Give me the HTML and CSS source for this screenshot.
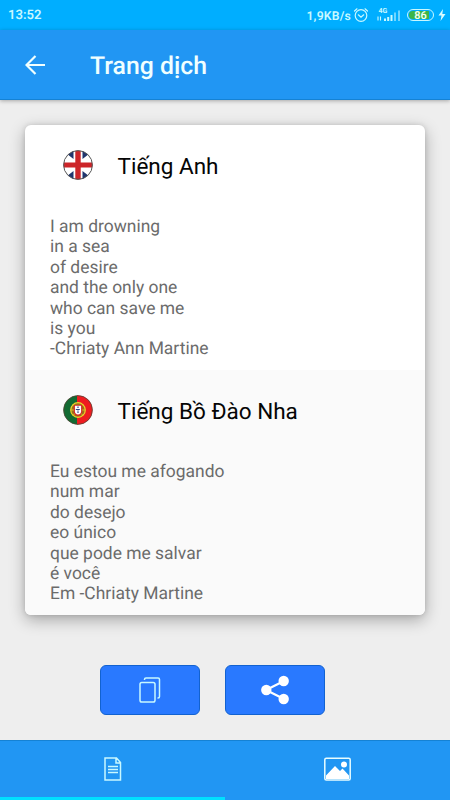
FILE: index.html
```html
<!DOCTYPE html>
<html lang="vi">
<head>
<meta charset="utf-8">
<title>Trang dịch</title>
<link rel="stylesheet" href="styles.css">
</head>
<body>
<div class="status">
  <span class="clock">13:52</span>
  <div class="status-right">
    <span class="speed">1,9KB/s</span>
    <svg class="alarm" width="16" height="16" viewBox="0 0 16 16" fill="none" stroke="#c8f8ff" stroke-width="1.2" stroke-linecap="round"><circle cx="8" cy="8.5" r="5.8"/><path d="M1.500 4 4 1.800M14.500 4 12 1.800M5.300 7.800 8 10.300l2.700-2.500"/></svg>
    <svg class="signal" width="24" height="16" viewBox="0 0 24 16"><text class="net" x="1.500" y="5.500">4G</text><path d="M1 9.500v4M3.500 9.500v4" stroke="#c8f8ff" stroke-width="1.100"/><path d="M7 11.500h2v2.500H7zM10.200 10h2v4h-2zM13.500 8h2v6h-2z" fill="#c8f8ff"/><path d="M17 5.500h2V14h-2zM21 3.500h2V14h-2z" fill="#71d5ff"/></svg>
    <div class="battery"><span class="level">86</span></div>
    <svg class="bolt" width="8" height="12" viewBox="0 0 8 12"><path d="M5 0 .5 6.500h3L2.500 12 7.500 5H4.300z" fill="#d8fbff"/></svg>
  </div>
</div>
<header class="appbar">
  <svg class="back" width="22" height="20" viewBox="0 0 22 20" fill="none" stroke="#f0ffff" stroke-width="2.200"><path d="M20 10H1.500M10.500 1 1.500 10l9 9"/></svg>
  <h1 class="title">Trang dịch</h1>
</header>
<main class="content">
  <div class="card">
    <section class="entry">
      <div class="entry-head">
        <svg class="flag" width="30" height="30" viewBox="0 0 30 30">
          <defs><clipPath id="uk"><circle cx="15" cy="15" r="14.500"/></clipPath></defs>
          <g clip-path="url(#uk)">
            <path d="M0 0h30v30H0z" fill="#fff"/>
            <path d="M1.500 2 10.500 9V0h-6zM28.500 2l-9 7V0h6zM1.500 28l9-7v9h-6zM28.500 28l-9-7v9h6z" fill="#20366e"/>
            <path d="M12.300 0h5.400v30h-5.400zM0 12.500h30v5H0z" fill="#cd2529"/>
          </g>
          <circle cx="15" cy="15" r="14.400" fill="none" stroke="#555" stroke-width="1"/>
        </svg>
        <h2 class="lang">Tiếng Anh</h2>
      </div>
      <p class="poem">I am drowning<br>in a sea<br>of desire<br>and the only one<br>who can save me<br>is you<br>-Chriaty Ann Martine</p>
    </section>
    <section class="entry entry-target">
      <div class="entry-head">
        <svg class="flag" width="30" height="30" viewBox="0 0 30 30">
          <defs><clipPath id="pt"><circle cx="15" cy="15" r="14.500"/></clipPath></defs>
          <g clip-path="url(#pt)"><path d="M0 0h15v30H0z" fill="#126a32"/><path d="M14 0h16v30H14z" fill="#ee1c20"/></g>
          <circle cx="15" cy="15" r="14.400" fill="none" stroke="#554336" stroke-width=".8"/>
          <circle cx="15" cy="15" r="7.300" fill="#9b6f1b" stroke="#edd52b" stroke-width="1.200"/>
          <path d="M8 15h14M10 9.500l10 11M20 9.500l-10 11" stroke="#e8cf2b" stroke-width=".8"/>
          <path d="M10.800 10h8.400v6.500a4.200 4.200 0 0 1-8.400 0z" fill="#d92225"/>
          <path d="M11.900 10.800h6.200v5.500a3.100 3.100 0 0 1-6.200 0z" fill="#fff"/>
          <path d="M15 11.500v6.600M12.800 14.500h4.400" stroke="#314787" stroke-width="1.200" stroke-dasharray="1.600 .8"/>
        </svg>
        <h2 class="lang">Tiếng Bồ Đào Nha</h2>
      </div>
      <p class="poem">Eu estou me afogando<br>num mar<br>do desejo<br>eo único<br>que pode me salvar<br>é você<br>Em -Chriaty Martine</p>
    </section>
  </div>
  <div class="actions">
    <button class="action" aria-label="Sao chép"><svg width="22" height="28" viewBox="0 0 22 28" fill="none" stroke="#c8f8ff" stroke-width="1.500"><rect x="1" y="6.500" width="15" height="19.500" rx="1.800"/><path d="M5.500 4V3.500a1.500 1.500 0 0 1 1.500-1.500h12a1.500 1.500 0 0 1 1.500 1.500v17a1.500 1.500 0 0 1-1.500 1.500h-.5"/></svg></button>
    <button class="action" aria-label="Chia sẻ"><svg width="30" height="30" viewBox="0 0 30 30" fill="#fff"><path d="M24 6 6 15l18 9" fill="none" stroke="#fff" stroke-width="2.200"/><circle cx="6.300" cy="15" r="5.200"/><circle cx="23.700" cy="6" r="5.200"/><circle cx="23.700" cy="24" r="5.200"/></svg></button>
  </div>
</main>
<nav class="tabs">
  <div class="tab tab-active"><svg width="18" height="24" viewBox="0 0 18 24" fill="none" stroke="#c8f8ff" stroke-width="1.500"><path d="M1 1h11.500L16.500 5.500V23H1zM12 1v5h4.500M4 9.500h10M4 12.500h10M4 15.500h10"/></svg></div>
  <div class="tab"><svg width="27" height="24" viewBox="0 0 27 24"><rect x=".8" y="1.300" width="25.400" height="21.700" rx="1.500" fill="none" stroke="#e8fdff" stroke-width="1.500"/><path d="M2 18.500 11 9l5 5 2.500-2.500 6.500 7V22H2z" fill="#fff"/><circle cx="20" cy="7.500" r="3" fill="#fff"/></svg></div>
</nav>
</body>
</html>
```
FILE: styles.css
```css
* { box-sizing: border-box; }
body {
  margin: 0;
  width: 450px;
  height: 800px;
  display: flex;
  flex-direction: column;
  overflow: hidden;
  background: #eee;
  font-family: Roboto, "Liberation Sans", sans-serif;
  text-rendering: geometricPrecision;
}
h1, h2, p { margin: 0; }
svg { display: block; flex: none; }

.status {
  height: 30px;
  flex: none;
  display: flex;
  align-items: center;
  justify-content: space-between;
  padding: 0 4px 0 8px;
  background: #00aeff;
  color: #c8f8ff;
}
.clock { margin-top: 1px; font-size: 13.1px; font-weight: 600; }
.status-right { display: flex; align-items: center; }
.speed { margin-top: 1px; font-size: 12.2px; font-weight: 600; letter-spacing: 0.2px; }
.alarm { margin-left: 2px; }
.signal { margin-left: 8px; }
.net { font-size: 7px; font-weight: 700; fill: #c8f8ff; }
.battery {
  width: 27px;
  height: 12px;
  margin: 0 4px 0 6px;
  padding: 1px;
  border: 1px solid #c8f8ff;
  border-radius: 6px;
}
.level {
  display: block;
  height: 8px;
  border-radius: 4px;
  background: linear-gradient(90deg, #3bb54a 86%, #00aeff 86%);
  color: #f2fff2;
  font-size: 11px;
  font-weight: 600;
  line-height: 9px;
  text-align: center;
}

.appbar {
  position: relative;
  height: 70px;
  flex: none;
  display: flex;
  align-items: center;
  padding-left: 25px;
  background: #2196f3;
  border-bottom: 1px solid #1582d4;
  box-shadow: 0 1px 4px rgba(0, 0, 0, 0.3);
}
.title {
  margin: 3px 0 0 43px;
  color: #f0ffff;
  font-size: 24.8px;
  font-weight: 500;
}

.content { flex: 1; padding: 25px 25px 0; }
.card {
  border-radius: 6px;
  overflow: hidden;
  background: #fff;
  box-shadow: 0 5px 16px rgba(0, 0, 0, 0.3), 0 0 5px rgba(0, 0, 0, 0.12);
}
.entry { height: 245px; padding: 25px 25px 0; }
.entry-target { background: #fafafa; }
.entry-head { display: flex; align-items: center; height: 30px; padding-left: 12.5px; }
.lang {
  margin: 3px 0 0 25px;
  color: #050505;
  font-size: 22.5px;
  font-weight: 400;
}
.poem {
  margin-top: 37px;
  color: #6b6b6b;
  font-size: 17.45px;
  line-height: 20.4px;
}

.actions { display: flex; gap: 25px; margin: 50px 0 0 75px; }
.action {
  width: 100px;
  height: 50px;
  display: flex;
  align-items: center;
  justify-content: center;
  padding: 0;
  border: 1px solid #1262d0;
  border-radius: 6px;
  background: #2979ff;
}

.tabs {
  height: 60px;
  flex: none;
  display: flex;
  background: #2196f3;
  border-top: 1px solid #1582d4;
}
.tab {
  flex: 1;
  display: flex;
  align-items: center;
  justify-content: center;
  border-bottom: 3px solid transparent;
}
.tab-active { border-bottom-color: #00e0ff; }
```
